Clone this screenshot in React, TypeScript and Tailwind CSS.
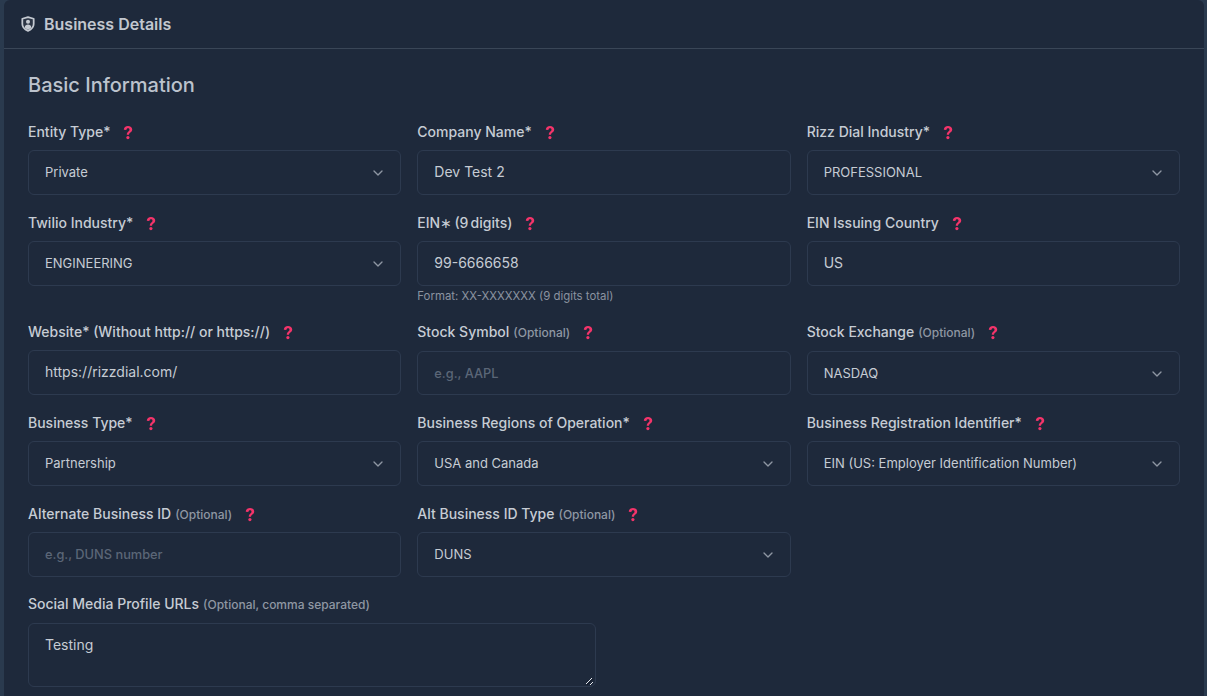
import React from "react";
import { ChevronDown } from "lucide-react";

function Help() {
  return (
    <svg viewBox="0 0 12 16" className="ml-3 w-[12px] h-[15px] shrink-0">
      <path d="M1.500 5C1.500 2.500 3.500 1 6 1s4.500 1.400 4.500 3.800c0 1.700-1 2.600-2.200 3.400-1 .7-1.200 1.100-1.200 2.300H4.700c0-1.900.5-2.800 1.700-3.700.8-.6 1.200-1 1.200-1.800 0-1-.7-1.500-1.600-1.500S4.300 4.200 4.300 5.300z" fill="#f4346a" />
      <circle cx="5.900" cy="13.400" r="1.700" fill="#f4346a" />
    </svg>
  );
}

function ShieldIcon() {
  return (
    <svg viewBox="0 0 16 18" className="w-[14px] h-[16px] shrink-0">
      <path d="M8 1.200 14.500 3v6c0 3.600-2.600 6.200-6.500 7.800C4.100 15.200 1.500 12.600 1.500 9V3z" fill="#2b3444" stroke="#c4c9d1" strokeWidth="2" strokeLinejoin="round" />
      <circle cx="8" cy="6.500" r="2.300" fill="#c4c9d1" />
      <path d="M4.200 13c.3-2.300 1.900-3.300 3.800-3.300s3.500 1 3.800 3.300C10.800 14.100 9.500 15 8 15.600 6.500 15 5.200 14.100 4.200 13z" fill="#c4c9d1" />
    </svg>
  );
}

function Label({ text, opt, help = true, low, tight }: { text: string; opt?: string; help?: boolean; low?: boolean; tight?: boolean }) {
  return (
    <div className={`flex items-center h-5 text-sm font-medium text-[#c6ccd4] ${low ? "mb-[9px]" : "mb-2"} ${tight ? "[word-spacing:-1.500px]" : ""}`}>
      <span>
        {text}
        {opt && <span className="ml-1 text-xs font-medium text-[#8f97a3]">{opt}</span>}
      </span>
      {help && <Help />}
    </div>
  );
}

function Select({ label, value, opt, low }: { label: string; value: string; opt?: string; low?: boolean }) {
  return (
    <div>
      <Label text={label} opt={opt} low={low} />
      <div className={`flex items-center justify-between pl-4 pr-[14px] rounded-md border border-[#2d3a4f] text-[13px] text-[#c6ccd4] ${low ? "h-[44px] pt-px" : "h-[45px]"}`}>
        <span>{value}</span>
        <ChevronDown size={16} strokeWidth={2} className="text-[#8f97a3]" />
      </div>
    </div>
  );
}

function Input({ label, value, opt, placeholder, hint, low, tight }: { label: string; value?: string; opt?: string; placeholder?: string; hint?: string; low?: boolean; tight?: boolean }) {
  return (
    <div>
      <Label text={label} opt={opt} low={low} tight={tight} />
      <div className={`flex items-center px-4 rounded-md border border-[#2d3a4f] ${low ? "h-[44px] pt-px" : "h-[45px]"} ${value ? "pb-[2px] text-sm text-[#c6ccd4]" : "text-[12.8px] font-medium text-[#5b6677]"}`}>
        {value ?? placeholder}
      </div>
      {hint && <p className="mt-[2px] text-[11.4px] leading-4 text-[#8b93a0]">{hint}</p>}
    </div>
  );
}

export default function App() {
  return (
    <div className="h-[696px] overflow-hidden bg-[#2a3a4e] pl-1 pr-[3px] font-['Inter',sans-serif]">
      <div className="h-full bg-[#1e293b] rounded-t-md">
        <div className="flex items-center gap-[9px] h-[49px] pl-[17px] pr-4 border-b border-[#3a4657]">
          <ShieldIcon />
          <h2 className="text-base font-semibold text-[#c2c7cf]">Business Details</h2>
        </div>
        <div className="pl-6 pt-[22px]">
          <h3 className="text-xl leading-7 font-medium text-[#bcc3cd] mb-[23px]">Basic Information</h3>
          <div className="grid grid-cols-3 gap-x-4 gap-y-[18px] w-[1152px]">
            <Select label="Entity Type*" value="Private" />
            <Input label="Company Name*" value="Dev Test 2" />
            <Select label="Rizz Dial Industry*" value="PROFESSIONAL" />
            <Select label="Twilio Industry*" value="ENGINEERING" />
            <Input label="EIN∗ (9 digits)" tight value="99-6666658" hint="Format: XX-XXXXXXX (9 digits total)" />
            <Input label="EIN Issuing Country" value="US" />
            <Input label="Website* (Without http:// or https://)" value="https://rizzdial.com/" />
            <Input label="Stock Symbol" opt="(Optional)" placeholder="e.g., AAPL" low />
            <Select label="Stock Exchange" opt="(Optional)" value="NASDAQ" low />
            <Select label="Business Type*" value="Partnership" />
            <Select label="Business Regions of Operation*" value="USA and Canada" />
            <Select label="Business Registration Identifier*" value="EIN (US: Employer Identification Number)" />
            <Input label="Alternate Business ID" opt="(Optional)" placeholder="e.g., DUNS number" />
            <Select label="Alt Business ID Type" opt="(Optional)" value="DUNS" />
          </div>
          <div className="mt-[17px]">
            <Label text="Social Media Profile URLs" opt="(Optional, comma separated)" help={false} />
            <div className="relative w-[568px] mt-[9px]">
              <textarea
                readOnly
                defaultValue="Testing"
                className="block w-full h-[64px] px-4 py-[11px] rounded-md border border-[#2d3a4f] bg-transparent text-sm text-[#c6ccd4] outline-none resize-none"
              />
              <svg viewBox="0 0 9 9" className="absolute right-[2px] bottom-[1px] w-[9px] h-[9px]">
                <path d="M1 7 7 1" stroke="#e5e7eb" strokeWidth="1" />
                <path d="M5 8 8 5" stroke="#e5e7eb" strokeWidth="1" />
                <path d="M2 8 8 2" stroke="#111827" strokeWidth="1" />
              </svg>
            </div>
          </div>
        </div>
      </div>
    </div>
  );
}
